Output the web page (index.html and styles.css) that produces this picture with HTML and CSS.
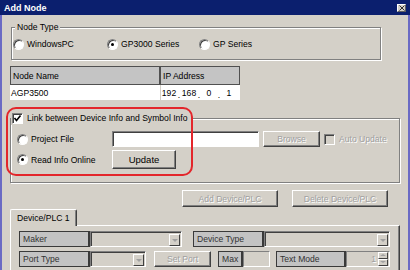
FILE: index.html
```html
<!DOCTYPE html>
<html lang="en">

<head>
    <meta charset="UTF-8">
    <title>Add Node</title>
    <link rel="stylesheet" href="styles.css">
</head>

<body>
    <div class="window">
        <div class="titlebar">
            <span>Add Node</span>
            <span class="close">
                <svg width="6" height="6" viewBox="0 0 6 6"><path d="M0.5 0.5 L5.5 5.5 M5.5 0.5 L0.5 5.5" stroke="#303030" stroke-width="1"/></svg>
            </span>
        </div>

        <div class="client">
            <fieldset class="group node-type">
                <legend>Node Type</legend>
                <div class="radio-row">
                    <label class="opt"><span class="radio"></span>WindowsPC</label>
                    <label class="opt"><span class="radio on"></span>GP3000 Series</label>
                    <label class="opt"><span class="radio"></span>GP Series</label>
                </div>
            </fieldset>

            <div class="node-table">
                <div class="th">Node Name</div>
                <div class="th">IP Address</div>
                <div class="td">AGP3500</div>
                <div class="td ip">
                    <span class="octet">192</span><span class="dot">.</span>
                    <span class="octet">168</span><span class="dot">.</span>
                    <span class="octet">0</span><span class="dot">.</span>
                    <span class="octet">1</span>
                </div>
            </div>

            <fieldset class="group link">
                <legend>
                    <span class="check">
                        <svg width="9" height="9" viewBox="0 0 9 9"><path d="M1.5 4 L3.5 6.5 L7.5 1.5" fill="none" stroke="#000" stroke-width="1.6"/></svg>
                    </span>
                    Link between Device Info and Symbol Info
                </legend>
                <div class="link-body">
                    <label class="opt"><span class="radio"></span>Project File</label>
                    <div class="file-row">
                        <span class="field"></span>
                        <span class="btn disabled browse">Browse</span>
                        <span class="check off"></span>
                        <span class="muted">Auto Update</span>
                    </div>
                    <label class="opt"><span class="radio on"></span>Read Info Online</label>
                    <div>
                        <span class="btn update">Update</span>
                    </div>
                </div>
            </fieldset>

            <div class="device-buttons">
                <span class="btn disabled wide">Add Device/PLC</span>
                <span class="btn disabled wide">Delete Device/PLC</span>
            </div>

            <div class="tabs">
                <span class="tab">Device/PLC 1</span>
            </div>
            <div class="panel">
                <div class="prow">
                    <span class="lbl w71">Maker</span>
                    <span class="combo w92"><span class="arrow"></span></span>
                    <span class="lbl w71 sp11">Device Type</span>
                    <span class="combo w126"><span class="arrow"></span></span>
                </div>
                <div class="prow">
                    <span class="lbl w71">Port Type</span>
                    <span class="combo w56"><span class="arrow"></span></span>
                    <span class="btn disabled setport">Set Port</span>
                    <span class="lbl max">Max</span>
                    <span class="box"></span>
                    <span class="lbl textmode">Text Mode</span>
                    <span class="spin">
                        <span class="muted">1</span>
                        <span class="spin-btns"><span class="up"></span><span class="down"></span></span>
                    </span>
                </div>
            </div>
        </div>

        <!-- red callout drawn over the dialog -->
        <div class="mark"></div>
    </div>
</body>

</html>
```

FILE: styles.css
```css
body {
    margin: 0;
    background: #d4d0c8;
    font-family: "Liberation Sans", Arial, sans-serif;
    font-size: 8.6px;
    color: #000;
}

.window {
    position: relative;
    width: 410px;
    height: 270px;
    overflow: hidden;
    display: flex;
    flex-direction: column;
}

.titlebar {
    height: 15px;
    flex: none;
    background: #0b1f6e;
    color: #fff;
    font-size: 9px;
    font-weight: bold;
    display: flex;
    align-items: center;
    justify-content: space-between;
    padding: 0 4px;
}

.close {
    width: 9px;
    height: 8px;
    box-sizing: border-box;
    background: #d4d0c8;
    border: 1px solid;
    border-color: #fff #606060 #606060 #fff;
    display: flex;
    align-items: center;
    justify-content: center;
}

.client {
    flex: 1;
    border-left: 2px solid #6a6ac4;
    border-right: 2px solid #6a6ac4;
    padding: 0 8px;
}

/* etched group boxes */
.group {
    margin: 0;
    padding: 0;
    min-width: 0;
    border: 1px solid #808080;
    box-shadow: inset 1px 1px 0 #fff, 1px 1px 0 #fff;
}

.group legend {
    background: #d4d0c8;
    line-height: 11px;
    padding: 0 2px;
}

.node-type {
    margin: 7px 19px 0 1px;
}

.node-type legend {
    margin-left: 3px;
}

.radio-row {
    display: grid;
    grid-template-columns: 94px 92px auto;
    height: 12px;
    align-items: center;
    padding: 5px 0 9px 1px;
}

.opt {
    display: flex;
    align-items: center;
    gap: 3px;
}

.radio {
    position: relative;
    width: 11px;
    height: 11px;
    box-sizing: border-box;
    border-radius: 50%;
    background: #fff;
    border: 1px solid;
    border-color: #808080 #fff #fff #808080;
    box-shadow: inset 1px 1px 0 #404040;
}

.radio.on::after {
    content: "";
    position: absolute;
    left: 3px;
    top: 3px;
    width: 3px;
    height: 3px;
    border-radius: 50%;
    background: #000;
}

.node-table {
    display: grid;
    grid-template-columns: 150px 80px;
    margin-top: 6px;
}

.th {
    height: 19px;
    box-sizing: border-box;
    border: 1px solid #505050;
    background: #c4c4c4;
    padding-left: 2px;
    display: flex;
    align-items: center;
}

.td {
    height: 15px;
    background: #fff;
    display: flex;
    align-items: center;
    padding-left: 1px;
}

.ip {
    padding-left: 0;
    border-left: 1px solid #d4d0c8;
}

.octet {
    width: 16px;
    text-align: center;
}

.dot {
    width: 4px;
    text-align: center;
    align-self: flex-end;
    line-height: 10px;
}

.link {
    margin-top: 12px;
}

.link legend {
    display: flex;
    align-items: center;
    gap: 4px;
    line-height: 13px;
    padding: 0 3px 0 1px;
}

.check {
    width: 11px;
    height: 11px;
    box-sizing: border-box;
    background: #fff;
    border: 1px solid;
    border-color: #808080 #fff #fff #808080;
    box-shadow: inset 1px 1px 0 #404040;
    display: flex;
    align-items: center;
    justify-content: center;
}

.check.off {
    background: #d4d0c8;
}

.link-body {
    display: grid;
    grid-template-columns: 95px auto;
    row-gap: 3px;
    align-items: center;
    padding: 6px 0 13px 6px;
}

.file-row {
    display: flex;
    align-items: center;
    gap: 4px;
}

.field {
    width: 147px;
    height: 16px;
    box-sizing: border-box;
    background: #fff;
    border: 1px solid;
    border-color: #808080 #fff #fff #808080;
    box-shadow: inset 1px 1px 0 #404040;
}

.muted {
    color: #a0a0a0;
    text-shadow: 1px 1px 0 #fff;
}

.btn {
    box-sizing: border-box;
    background: #d4d0c8;
    border: 1px solid;
    border-color: #fff #404040 #404040 #fff;
    box-shadow: inset -1px -1px 0 #808080;
    display: flex;
    align-items: center;
    justify-content: center;
}

.btn.disabled {
    color: #a0a0a0;
    text-shadow: 1px 1px 0 #fff;
}

.browse {
    width: 57px;
    height: 16px;
}

.update {
    width: 64px;
    height: 19px;
    font-size: 9.5px;
}

.device-buttons {
    display: flex;
    justify-content: flex-end;
    gap: 14px;
    margin: 7px 12px 0 0;
}

.wide {
    width: 96px;
    height: 17px;
}

.tabs {
    display: flex;
    margin-top: 2px;
}

.tab {
    position: relative;
    z-index: 1;
    width: 67px;
    height: 17px;
    box-sizing: border-box;
    margin-bottom: -1px;
    padding-left: 6px;
    background: #d4d0c8;
    border: 1px solid;
    border-color: #fff #404040 transparent #fff;
    border-bottom: none;
    border-radius: 2px 2px 0 0;
    box-shadow: inset -1px 0 0 #808080;
    display: flex;
    align-items: center;
}

.panel {
    height: 60px;
    border-top: 1px solid #fff;
    border-left: 1px solid #fff;
    border-right: 1px solid #404040;
    box-shadow: inset -1px 0 0 #808080;
    padding: 5px 0 0 8px;
    display: flex;
    flex-direction: column;
    gap: 4px;
}

.prow {
    display: flex;
    height: 16px;
}

.lbl {
    box-sizing: border-box;
    height: 16px;
    background: #c3c3c3;
    border: 1px solid #3a3a3a;
    border-right-width: 2px;
    padding-left: 3px;
    color: #333;
    display: flex;
    align-items: center;
}

.w71 { width: 71px; }
.w92 { width: 92px; }
.w126 { width: 126px; }
.w56 { width: 56px; }
.sp11 { margin-left: 11px; }

.combo {
    box-sizing: border-box;
    height: 16px;
    background: #d4d0c8;
    border: 1px solid;
    border-color: #808080 #fff #fff #808080;
    box-shadow: inset 1px 1px 0 #404040;
    display: flex;
    justify-content: flex-end;
    align-items: center;
    padding: 1px 1px 0 0;
}

.arrow,
.spin-btns span {
    position: relative;
    box-sizing: border-box;
    background: #d4d0c8;
    border: 1px solid;
    border-color: #fff #404040 #404040 #fff;
}

.arrow {
    width: 11px;
    height: 12px;
}

.arrow::after,
.spin-btns span::after {
    content: "";
    position: absolute;
    left: 2px;
    top: 4px;
    border-left: 3px solid transparent;
    border-right: 3px solid transparent;
    border-top: 3px solid #a0a0a0;
}

.setport {
    width: 57px;
    height: 16px;
    margin-left: 8px;
}

.max {
    width: 25px;
    margin-left: 7px;
}

.box {
    box-sizing: border-box;
    width: 27px;
    height: 16px;
    border: 1px solid;
    border-color: #808080 #fff #fff #808080;
}

.textmode {
    width: 70px;
    margin-left: 6px;
}

.spin {
    box-sizing: border-box;
    width: 44px;
    height: 16px;
    border: 1px solid;
    border-color: #808080 #fff #fff #808080;
    display: flex;
    justify-content: flex-end;
    align-items: center;
    gap: 2px;
    padding-right: 1px;
}

.spin-btns {
    display: flex;
    flex-direction: column;
}

.spin-btns span {
    width: 10px;
    height: 7px;
}

.spin-btns span::after {
    left: 1px;
    top: 1px;
    border-left-width: 3px;
    border-right-width: 3px;
    border-top-width: 2px;
}

.spin-btns .up::after {
    border-top: none;
    border-bottom: 2px solid #a0a0a0;
}

.mark {
    position: absolute;
    left: 6px;
    top: 107px;
    width: 187px;
    height: 69px;
    box-sizing: border-box;
    border: 2px solid #e3262b;
    border-radius: 10px;
}
```
